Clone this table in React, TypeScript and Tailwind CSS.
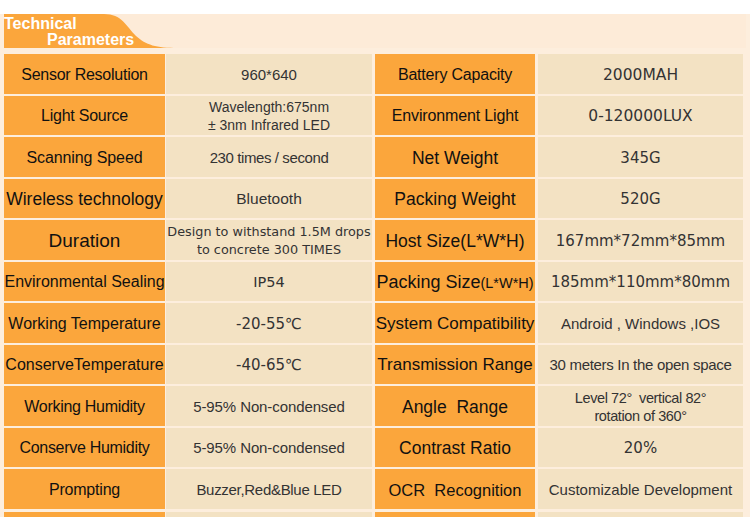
import type { ReactNode } from "react"

type Cell = {
  text: ReactNode
  cls: string
}

type Row = [Cell, Cell, Cell, Cell]

const arial = "font-['Liberation_Sans',Arial,sans-serif]"
const dejavu = "font-['DejaVu_Sans',Verdana,sans-serif]"

const rows: Row[] = [
  [
    { text: "Sensor Resolution", cls: "text-[16px] tracking-[-0.25px]" },
    { text: "960*640", cls: `${arial} text-[15px]` },
    { text: "Battery Capacity", cls: "text-[16px] tracking-[-0.2px]" },
    { text: "2000MAH", cls: `${dejavu} text-[15.5px]` },
  ],
  [
    { text: "Light Source", cls: "text-[16px] tracking-[-0.25px]" },
    {
      text: (
        <>
          Wavelength:675nm
          <br />± 3nm Infrared LED
        </>
      ),
      cls: `${arial} text-[14px] leading-[16px]`,
    },
    { text: "Environment Light", cls: "text-[16px] tracking-[-0.15px]" },
    { text: "0-120000LUX", cls: `${dejavu} text-[15.5px]` },
  ],
  [
    { text: "Scanning Speed", cls: "text-[16px] tracking-[-0.1px]" },
    { text: "230 times / second", cls: `${arial} text-[15px] tracking-[-0.4px]` },
    { text: "Net Weight", cls: "text-[17.5px]" },
    { text: "345G", cls: `${dejavu} text-[15px]` },
  ],
  [
    { text: "Wireless technology", cls: "text-[17.5px]" },
    { text: "Bluetooth", cls: `${arial} text-[15.5px]` },
    { text: "Packing Weight", cls: "text-[17.5px]" },
    { text: "520G", cls: `${dejavu} text-[15px]` },
  ],
  [
    { text: "Duration", cls: "text-[19px]" },
    {
      text: (
        <>
          Design to withstand 1.5M drops
          <br />
          to concrete 300 TIMES
        </>
      ),
      cls: `${dejavu} text-[12.8px] leading-[12.5px]`,
    },
    { text: "Host Size(L*W*H)", cls: "text-[17.5px]" },
    { text: "167mm*72mm*85mm", cls: `${dejavu} text-[15px]` },
  ],
  [
    { text: "Environmental Sealing", cls: "text-[16px]" },
    { text: "IP54", cls: `${dejavu} text-[14.5px]` },
    {
      text: (
        <>
          Packing Size<span className="text-[14.5px]">(L*W*H)</span>
        </>
      ),
      cls: "text-[18px]",
    },
    { text: "185mm*110mm*80mm", cls: `${dejavu} text-[15px]` },
  ],
  [
    { text: "Working Temperature", cls: "text-[16px]" },
    { text: "-20-55℃", cls: `${dejavu} text-[15px]` },
    { text: "System Compatibility", cls: "text-[17px]" },
    { text: "Android , Windows ,IOS", cls: `${arial} text-[15px] whitespace-pre` },
  ],
  [
    { text: "ConserveTemperature", cls: "text-[16px]" },
    { text: "-40-65℃", cls: `${dejavu} text-[15px]` },
    { text: "Transmission Range", cls: "text-[17px]" },
    { text: "30 meters In the open space", cls: `${arial} text-[15px] tracking-[-0.3px]` },
  ],
  [
    { text: "Working Humidity", cls: "text-[16px] tracking-[-0.3px]" },
    { text: "5-95% Non-condensed", cls: `${arial} text-[15px] tracking-[-0.1px]` },
    { text: "Angle  Range", cls: "text-[17.5px] whitespace-pre" },
    {
      text: (
        <>
          Level 72°{"  "}vertical 82°
          <br />
          rotation of 360°
        </>
      ),
      cls: `${arial} text-[14.5px] leading-[15px] tracking-[-0.4px] whitespace-pre`,
    },
  ],
  [
    { text: "Conserve Humidity", cls: "text-[16px] tracking-[-0.3px]" },
    { text: "5-95% Non-condensed", cls: `${arial} text-[15px] tracking-[-0.1px]` },
    { text: "Contrast Ratio", cls: "text-[17.5px]" },
    { text: "20%", cls: `${dejavu} text-[15px]` },
  ],
  [
    { text: "Prompting", cls: "text-[16px] tracking-[-0.2px]" },
    { text: "Buzzer,Red&Blue LED", cls: `${arial} text-[15px] tracking-[-0.3px]` },
    { text: "OCR  Recognition", cls: "text-[16.5px] whitespace-pre" },
    { text: "Customizable Development", cls: `${arial} text-[15px]` },
  ],
]

function Label({ cell, w }: { cell: Cell; w: string }) {
  return (
    <div
      className={`${w} flex items-center justify-center bg-[#fba63c] pt-[2px] text-center text-[#111] font-['Liberation_Sans',Arial,sans-serif] leading-[18px] ${cell.cls}`}
    >
      <span>{cell.text}</span>
    </div>
  )
}

function Value({ cell, w }: { cell: Cell; w: string }) {
  return (
    <div
      className={`${w} flex items-center justify-center bg-[#f3e2c3] pt-[2px] text-center text-[#333] leading-[18px] ${cell.cls}`}
    >
      <span>{cell.text}</span>
    </div>
  )
}

export default function App() {
  return (
    <div className="w-[750px] h-[517px] overflow-hidden bg-white pt-[14px]">
      <div className="h-full bg-[#fdeedd] px-[4px]">
        {/* header band */}
        <div className="relative h-[34px] w-[742px] bg-[#fdebd8]">
          <svg
            className="absolute left-0 top-0"
            width="176"
            height="34"
            viewBox="0 0 176 34"
          >
            <path
              d="M0 0 H100 C118 0 122 12 132 22 C142 31 152 34 174 34 H0 Z"
              fill="#fba63c"
            />
          </svg>
          <div className="relative flex flex-col pt-[1.5px] font-['Liberation_Sans',Arial,sans-serif] text-[16px] font-bold leading-[16px] text-white">
            <span>Technical</span>
            <span className="ml-[43px]">Parameters</span>
          </div>
        </div>

        <div className="mt-[6px] flex flex-col gap-[2px]">
          {rows.map((r, i) => (
            <div key={i} className="flex h-[39.5px]">
              <Label cell={r[0]} w="w-[161px]" />
              <Value cell={r[1]} w="ml-[1px] w-[206px]" />
              <Label cell={r[2]} w="ml-[3px] w-[160px]" />
              <Value cell={r[3]} w="ml-[3px] w-[205px]" />
            </div>
          ))}
          <div className="flex h-[39.5px] mt-[1px]">
            <div className="w-[161px] bg-[#fba63c]" />
            <div className="ml-[1px] w-[206px] bg-[#f3e2c3]" />
            <div className="ml-[3px] w-[160px] bg-[#fba63c]" />
            <div className="ml-[3px] w-[205px] bg-[#f3e2c3]" />
          </div>
        </div>
      </div>
    </div>
  )
}
